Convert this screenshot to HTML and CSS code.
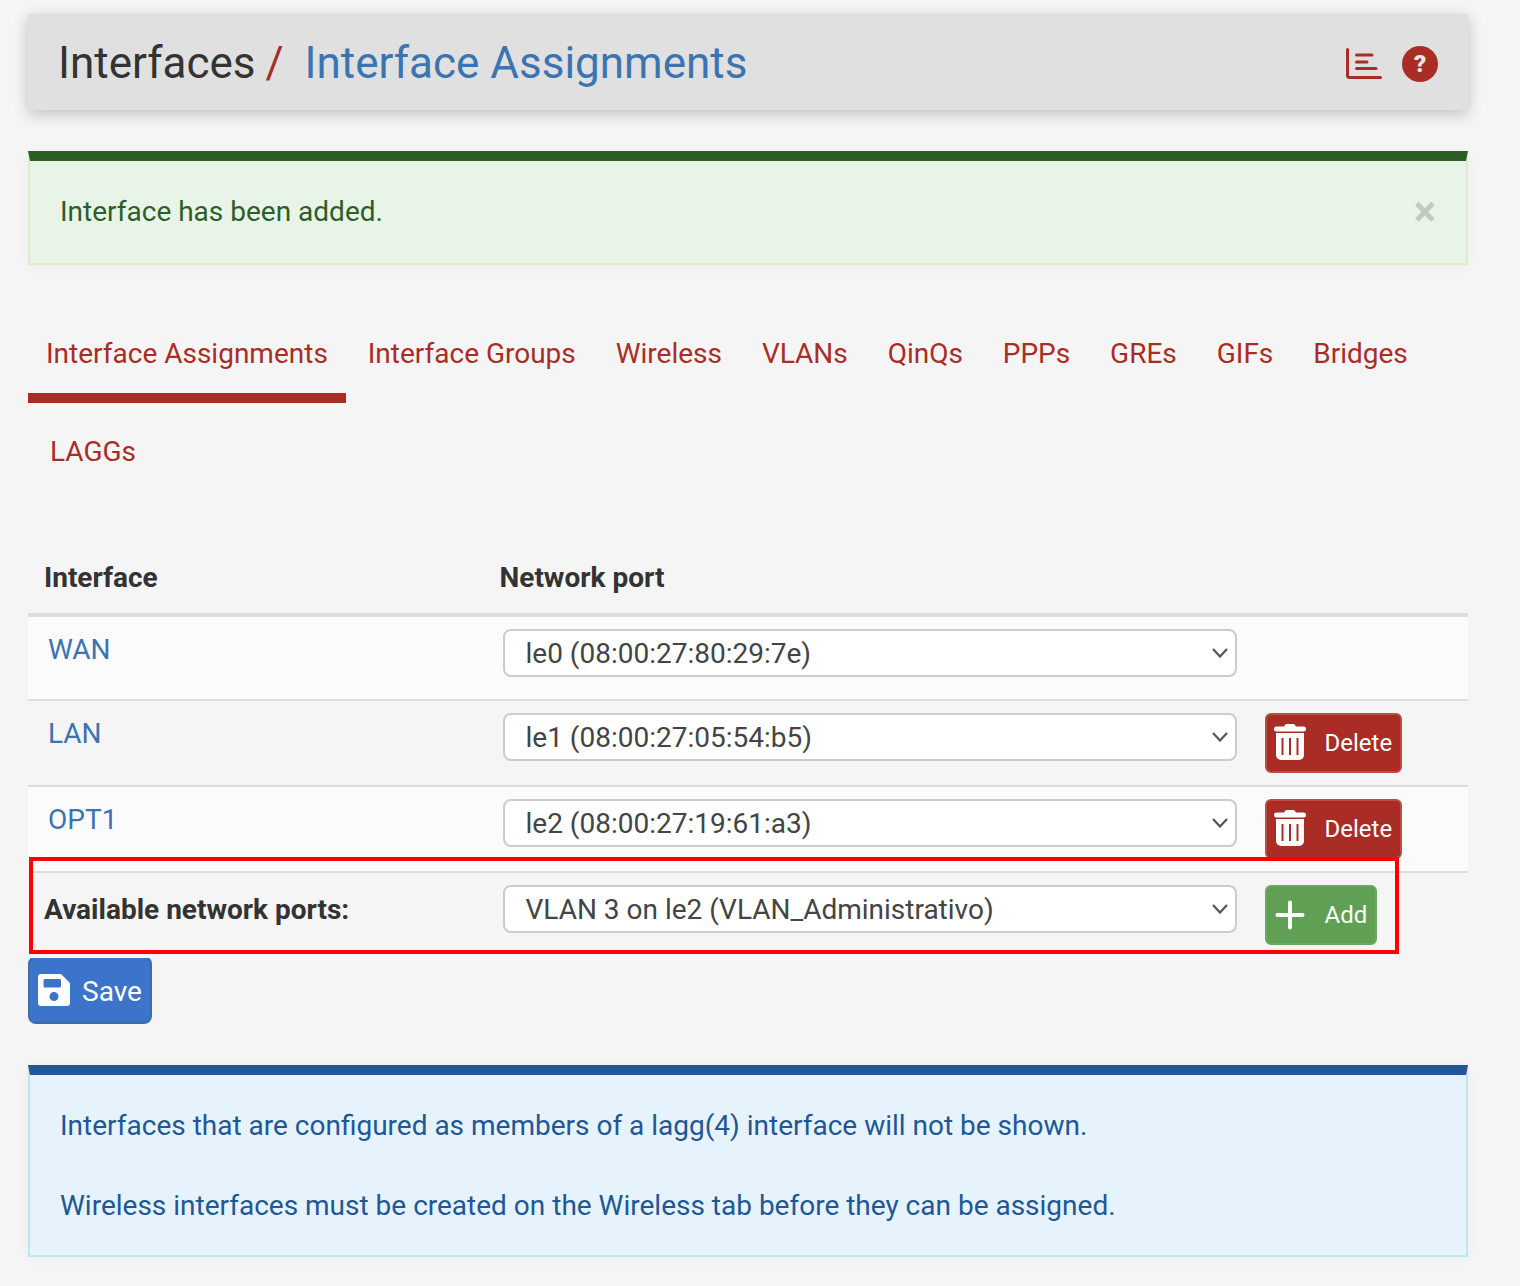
FILE: index.html
```html
<!DOCTYPE html>
<html lang="en">
<head>
    <meta charset="UTF-8">
    <title>Interfaces / Interface Assignments</title>
    <link rel="stylesheet" href="styles.css">
</head>
<body>
    <div class="container">
        <!-- Breadcrumb -->
        <header class="page-header">
            <h1 class="crumbs">
                <span>Interfaces</span>
                <span class="crumb-sep">/</span>
                <a href="#" class="crumb-link">Interface Assignments</a>
            </h1>
            <div class="header-icons">
                <svg class="icon-chart" viewBox="0 0 36 31" width="36" height="31">
                    <path d="M1.500 1.500V27.500a2 2 0 0 0 2 2H34.500" fill="none" stroke="#a92d25" stroke-width="3" stroke-linecap="round"/>
                    <path d="M10.500 7H26M10.500 14H21M10.500 20.500H30" fill="none" stroke="#a92d25" stroke-width="3" stroke-linecap="round"/>
                </svg>
                <span class="icon-help">?</span>
            </div>
        </header>

        <div class="alert alert-success">
            <span>Interface has been added.</span>
            <span class="alert-close">&times;</span>
        </div>

        <!-- Tabs -->
        <ul class="tabs">
            <li class="tab active"><a href="#">Interface Assignments</a></li>
            <li class="tab"><a href="#">Interface Groups</a></li>
            <li class="tab"><a href="#">Wireless</a></li>
            <li class="tab"><a href="#">VLANs</a></li>
            <li class="tab"><a href="#">QinQs</a></li>
            <li class="tab"><a href="#">PPPs</a></li>
            <li class="tab"><a href="#">GREs</a></li>
            <li class="tab"><a href="#">GIFs</a></li>
            <li class="tab"><a href="#">Bridges</a></li>
            <li class="tab"><a href="#">LAGGs</a></li>
        </ul>

        <!-- Assignments -->
        <div class="assign">
            <div class="assign-row assign-head">
                <div class="col-name">Interface</div>
                <div class="col-port">Network port</div>
            </div>
            <div class="assign-row assign-item assign-first">
                <div class="col-name"><a href="#">WAN</a></div>
                <div class="col-port">
                    <div class="select-box">
                        <span>le0 (08:00:27:80:29:7e)</span>
                        <svg class="chevron" viewBox="0 0 16 10" width="16" height="10"><path d="M1 1l7 7.500L15 1" fill="none" stroke="#555" stroke-width="2.200"/></svg>
                    </div>
                </div>
            </div>
            <div class="assign-row assign-item assign-even">
                <div class="col-name"><a href="#">LAN</a></div>
                <div class="col-port">
                    <div class="select-box">
                        <span>le1 (08:00:27:05:54:b5)</span>
                        <svg class="chevron" viewBox="0 0 16 10" width="16" height="10"><path d="M1 1l7 7.500L15 1" fill="none" stroke="#555" stroke-width="2.200"/></svg>
                    </div>
                </div>
                <div class="col-action">
                    <a href="#" class="btn btn-danger">
                        <svg class="btn-icon" viewBox="0 0 32 38" width="32" height="38">
                            <path d="M0 5A2.500 2.500 0 0 1 2.500 2.500H10L11 1a2 2 0 0 1 1.700-1h6.600a2 2 0 0 1 1.700 1L22 2.500h7.500a2.500 2.500 0 0 1 0 5H2.500A2.500 2.500 0 0 1 0 5Z" fill="#fff"/>
                            <path fill-rule="evenodd" d="M2 9H30V31a5 5 0 0 1-5 5H7a5 5 0 0 1-5-5ZM7.500 14V31H9.500V14ZM15 14V31H17V14ZM22.500 14V31H24.500V14Z" fill="#fff"/>
                        </svg>
                        <span>Delete</span>
                    </a>
                </div>
            </div>
            <div class="assign-row assign-item">
                <div class="col-name"><a href="#">OPT1</a></div>
                <div class="col-port">
                    <div class="select-box">
                        <span>le2 (08:00:27:19:61:a3)</span>
                        <svg class="chevron" viewBox="0 0 16 10" width="16" height="10"><path d="M1 1l7 7.500L15 1" fill="none" stroke="#555" stroke-width="2.200"/></svg>
                    </div>
                </div>
                <div class="col-action">
                    <a href="#" class="btn btn-danger">
                        <svg class="btn-icon" viewBox="0 0 32 38" width="32" height="38">
                            <path d="M0 5A2.500 2.500 0 0 1 2.500 2.500H10L11 1a2 2 0 0 1 1.700-1h6.600a2 2 0 0 1 1.700 1L22 2.500h7.500a2.500 2.500 0 0 1 0 5H2.500A2.500 2.500 0 0 1 0 5Z" fill="#fff"/>
                            <path fill-rule="evenodd" d="M2 9H30V31a5 5 0 0 1-5 5H7a5 5 0 0 1-5-5ZM7.500 14V31H9.500V14ZM15 14V31H17V14ZM22.500 14V31H24.500V14Z" fill="#fff"/>
                        </svg>
                        <span>Delete</span>
                    </a>
                </div>
            </div>
            <div class="assign-row assign-item assign-new">
                <div class="col-name"><strong>Available network ports:</strong></div>
                <div class="col-port">
                    <div class="select-box">
                        <span>VLAN 3 on le2 (VLAN_Administrativo)</span>
                        <svg class="chevron" viewBox="0 0 16 10" width="16" height="10"><path d="M1 1l7 7.500L15 1" fill="none" stroke="#555" stroke-width="2.200"/></svg>
                    </div>
                </div>
                <div class="col-action">
                    <a href="#" class="btn btn-success">
                        <svg class="btn-icon" viewBox="0 0 32 38" width="32" height="38">
                            <path d="M16 6.500V31.500M3.500 19H28.500" fill="none" stroke="#fff" stroke-width="4" stroke-linecap="round"/>
                        </svg>
                        <span>Add</span>
                    </a>
                </div>
                <div class="highlight-box"></div>
            </div>
        </div>

        <a href="#" class="btn btn-primary btn-save">
            <svg viewBox="0 0 32 32" width="32" height="32">
                <path fill-rule="evenodd" d="M3 0H23L32 9V29a3 3 0 0 1-3 3H3a3 3 0 0 1-3-3V3a3 3 0 0 1 3-3ZM7 5a1.500 1.500 0 0 0-1.500 1.500V12A1.500 1.500 0 0 0 7 13.500H21.500A1.500 1.500 0 0 0 23 12V6.500A1.500 1.500 0 0 0 21.500 5ZM16 18a4.500 4.500 0 1 0 0 9 4.500 4.500 0 0 0 0-9Z" fill="#fff"/>
            </svg>
            <span>Save</span>
        </a>

        <div class="alert alert-info">
            <p>Interfaces that are configured as members of a lagg(4) interface will not be shown.</p>
            <p>Wireless interfaces must be created on the Wireless tab before they can be assigned.</p>
        </div>
    </div>
</body>
</html>
```

FILE: styles.css
```css
body {
    margin: 0;
    background: #f5f5f5;
    color: #333;
    font-family: Roboto, sans-serif;
    font-size: 28px;
    line-height: 40px;
}
a {
    text-decoration: none;
}
.container {
    width: 1440px;
    height: 1286px;
    padding: 14px 52px 0 28px;
    overflow: hidden;
}

/* header */
.page-header {
    box-sizing: border-box;
    display: flex;
    justify-content: space-between;
    align-items: center;
    height: 96px;
    padding: 3px 30px 0 30px;
    background: #e0e0e0;
    box-shadow: 0 4px 14px rgba(0, 0, 0, 0.22);
}
.crumbs {
    margin: 0 0 1px;
    font-size: 44px;
    font-weight: 400;
    line-height: 48px;
}
.crumb-sep {
    color: #a92d25;
    margin: 0 10px 0 -1px;
}
.crumb-link {
    color: #3b74b0;
}
.header-icons {
    display: flex;
    align-items: center;
    gap: 20px;
}
.icon-help {
    width: 36px;
    height: 36px;
    border-radius: 50%;
    background: #a92d25;
    color: #e8e8e8;
    font-size: 24px;
    font-weight: 900;
    line-height: 36px;
    text-align: center;
}

/* alerts */
.alert {
    box-sizing: border-box;
    border-style: solid;
    border-width: 10px 2px 2px;
    box-shadow: 0 2px 14px rgba(0, 0, 0, 0.04);
}
.alert-success {
    display: flex;
    justify-content: space-between;
    align-items: center;
    height: 114px;
    margin-top: 41px;
    padding: 0 30px;
    background: #e9f4e8;
    border-color: #2d5e28 #deedd0 #deedd0;
    color: #2c5f27;
}
.alert-close {
    color: #c2c8c2;
    font-size: 42px;
    font-weight: 700;
}
.alert-info {
    height: 192px;
    margin-top: 41px;
    padding: 31px 30px 0;
    background: #e6f3fc;
    border-color: #225796 #bfe6ee #bfe6ee;
    color: #225796;
}
.alert-info p {
    margin: 0 0 40px;
}

/* tabs */
.tabs {
    display: flex;
    flex-wrap: wrap;
    margin: 31px 0 0;
    padding: 0;
    list-style: none;
    height: 196px;
    align-content: flex-start;
}
.tab {
    height: 88px;
    padding: 0 18.500px 0 18px;
    margin: 19px 3.400px 0 0;
    line-height: 78px;
}
.tab:last-child {
    margin-top: 0;
    padding-left: 22px;
    line-height: 98px;
}
.tab a {
    color: #a92d25;
}
.tab.active {
    box-sizing: border-box;
    border-bottom: 10px solid #a92d25;
}

/* table */
.assign-row {
    display: flex;
    position: relative;
}
.col-name {
    width: 471.500px;
    padding-left: 16px;
    box-sizing: border-box;
}
.col-name a {
    color: #3b74b0;
    padding-left: 4px;
}
.col-port {
    width: 737.500px;
}
.assign-head {
    box-sizing: border-box;
    height: 76px;
    align-items: center;
    margin-top: 49px;
    padding-top: 2px;
    border-bottom: 4px solid #ddd;
    font-weight: 700;
}
.assign-item {
    box-sizing: border-box;
    height: 86px;
    padding-top: 12px;
    border-bottom: 2px solid #ddd;
    background: #fbfbfb;
}
.assign-item .col-name {
    line-height: 42px;
}
.assign-first {
    height: 84px;
}
.assign-even {
    background: #f5f5f5;
}
.assign-item .col-port {
    padding-left: 3.500px;
    box-sizing: border-box;
}
.assign-new {
    background: #f5f5f5;
    border-bottom: 0;
    height: 85px;
}
.assign-new .col-name {
    line-height: 50px;
}
.col-action {
    margin-left: 28px;
}
.select-box {
    box-sizing: border-box;
    display: flex;
    align-items: center;
    justify-content: space-between;
    width: 734px;
    height: 48px;
    padding: 0 7px 0 20.500px;
    background: #fff;
    border: 2px solid #ccc;
    border-radius: 8px;
    color: #444;
}
.select-box span {
    padding-top: 2px;
}

/* buttons */
.btn {
    box-sizing: border-box;
    display: inline-flex;
    align-items: center;
    height: 60px;
    border: 2px solid;
    border-radius: 6px;
    color: #fff;
    font-size: 24px;
}
.btn-icon {
    margin-left: 7px;
    margin-right: 18.500px;
}
.btn-danger {
    width: 137px;
    background: #a92d25;
    border-color: #c14b43;
}
.btn-success {
    width: 112px;
    background: #5fa055;
    border-color: #6aa962;
}
.btn-primary {
    background: #3b74ca;
    border-color: #3f6ca8;
}
.btn-save {
    display: flex;
    gap: 12px;
    width: 124px;
    height: 68px;
    margin-top: -2px;
    padding-left: 8px;
    font-size: 28px;
    border-radius: 8px;
}
.btn-save span {
    padding-top: 4px;
}

/* red box drawn on top of the last row */
.highlight-box {
    position: absolute;
    left: 1px;
    top: -16px;
    width: 1370px;
    height: 97px;
    box-sizing: border-box;
    border: 4px solid #ff0000;
    pointer-events: none;
}
```
